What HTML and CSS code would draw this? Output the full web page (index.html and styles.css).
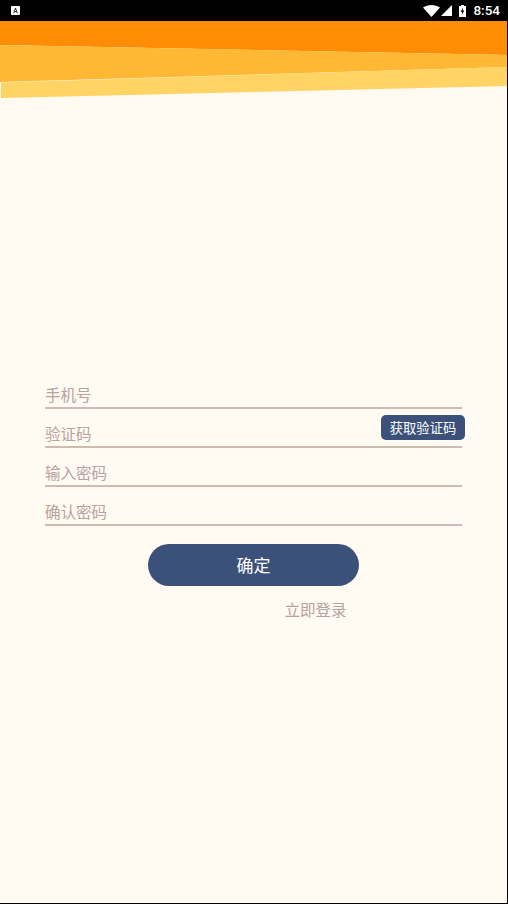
FILE: index.html
```html
<!DOCTYPE html>
<html lang="zh-CN">
<head>
  <meta charset="UTF-8" />
  <meta name="viewport" content="width=device-width, initial-scale=1.0"/>
  <title>注册</title>
  <link rel="stylesheet" href="styles.css">
</head>
<body>

  <div class="page">
    <div class="status-bar">
      <div class="status-left">
        <svg class="icon-a" width="9" height="9" viewBox="0 0 9 9">
          <rect width="9" height="9" rx="1" fill="#fff"/>
          <path d="M2.2 7.2 L4 2 H5 L6.8 7.2 H5.7 L5.35 6 H3.65 L3.3 7.2 Z M3.95 5.1 H5.05 L4.5 3.3 Z" fill="#333" fill-rule="evenodd"/>
        </svg>
      </div>
      <div class="status-right">
        <svg width="17" height="12" viewBox="0 0 17 12"><path d="M0 2.6 C4.6 -0.8 12.4 -0.8 17 2.6 L8.5 12 Z" fill="#fff"/></svg>
        <svg width="11" height="11" viewBox="0 0 11 11"><path d="M0 11 L11 0 V11 Z" fill="#fff"/></svg>
        <svg class="icon-battery" width="7" height="12" viewBox="0 0 7 12">
          <path d="M2 0 H5 V1 H7 V12 H0 V1 H2 Z" fill="#fff"/>
          <path d="M4.1 2.4 L1.7 6.8 H3.2 L2.8 10 L5.3 5.6 H3.7 Z" fill="#000"/>
        </svg>
        <span class="clock">8:54</span>
      </div>
    </div>

    <svg class="waves" width="507" height="77" viewBox="0 0 507 77">
      <rect width="507" height="77" fill="#fffaf2"/>
      <path d="M0 0 H507 V34 L0 24 Z" fill="#ff8c05"/>
      <path d="M0 24 L507 34 V46 L0 61 Z" fill="#ffb833"/>
      <path d="M1 61.5 L507 46 V65 L1 77 Z" fill="#ffd364"/>
    </svg>

    <form class="form">
      <div class="field"><input type="text" placeholder="手机号"></div>
      <div class="field">
        <input type="text" placeholder="验证码">
        <button type="button" class="code-btn">获取验证码</button>
      </div>
      <div class="field"><input type="password" placeholder="输入密码"></div>
      <div class="field"><input type="password" placeholder="确认密码"></div>

      <button type="button" class="submit-btn">确定</button>
      <div class="login-row"><a class="login-link">立即登录</a></div>
    </form>
  </div>

</body>
</html>
```

FILE: styles.css
```css
* {
  box-sizing: border-box;
}

body {
  margin: 0;
  padding: 0;
  background-color: #000;
  font-family: "Noto Sans CJK SC", "Liberation Sans", sans-serif;
  overflow: hidden;
}

.page {
  width: 507px;
  height: 903px;
  background-color: #fffaf2;
}

.status-bar {
  height: 21px;
  background-color: #000;
  display: flex;
  justify-content: space-between;
  align-items: center;
  padding: 0 7px 0 11px;
}

.status-left {
  display: flex;
}

.status-right {
  display: flex;
  align-items: center;
  gap: 1px;
}

.icon-battery {
  margin-left: 6px;
}

.clock {
  margin-left: 6px;
  color: #fff;
  font-family: Roboto, "Liberation Sans", sans-serif;
  font-size: 13.5px;
  font-weight: 500;
  line-height: 21px;
}

.waves {
  display: block;
}

.form {
  width: 417px;
  margin: 0 0 0 45px;
  padding-top: 272px;
}

.field {
  position: relative;
  height: 39px;
  border-bottom: 2px solid #cfbbb1;
}

.field input {
  display: block;
  width: 100%;
  height: 37px;
  padding: 11px 0 0;
  border: none;
  outline: none;
  background: transparent;
  font-family: inherit;
  font-size: 15.5px;
  color: #444;
}

.field input::placeholder {
  color: #b7a29c;
  opacity: 1;
}

.code-btn {
  position: absolute;
  top: 6px;
  right: -3px;
  width: 84px;
  height: 25px;
  padding: 0;
  border: none;
  border-radius: 5px;
  background-color: #3c5179;
  color: #fff;
  font-family: inherit;
  font-size: 13.3px;
}

.submit-btn {
  display: block;
  width: 211px;
  height: 42px;
  margin: 18px 0 0 103px;
  padding: 0 0 2px;
  border: none;
  border-radius: 21px;
  background-color: #3c5179;
  color: #fff;
  font-family: inherit;
  font-size: 17px;
}

.login-row {
  padding: 11px 0 0 239.5px;
}

.login-link {
  color: #b7a29c;
  font-size: 15.5px;
  line-height: 24px;
}
```
